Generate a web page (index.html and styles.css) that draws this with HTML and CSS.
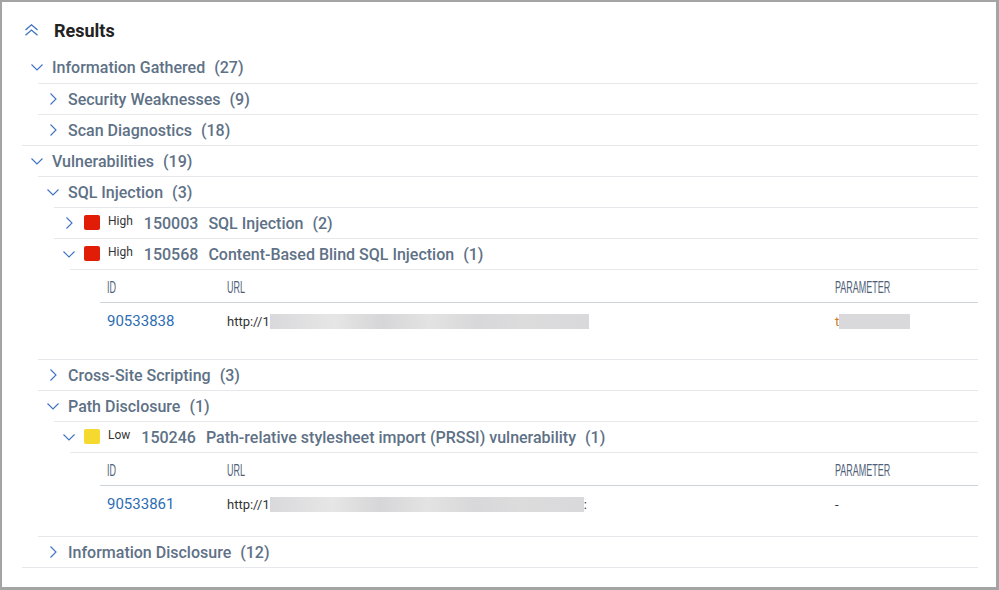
FILE: index.html
```html
<!DOCTYPE html>
<html>
<head>
<meta charset="utf-8">
<link rel="stylesheet" href="styles.css">
</head>
<body>
<div class="page">
  <div class="header">
    <svg class="dbl" width="13" height="12" viewBox="0 0 13 12"><polyline points="0.5,6 6.5,0.8 12.5,6" fill="none" stroke="#3d72c0" stroke-width="1.3"/><polyline points="0.5,11.2 6.5,6 12.5,11.2" fill="none" stroke="#3d72c0" stroke-width="1.3"/></svg>
    <span class="title">Results</span>
  </div>
  <div class="tree">
    <div class="row l1 first"><span class="ic"><svg width="12" height="7" viewBox="0 0 12 7"><polyline points="0.5,0.5 6,6 11.5,0.5" fill="none" stroke="#3d72c0" stroke-width="1.1"/></svg></span><span class="name">Information Gathered</span><span class="cnt">(27)</span></div>
    <div class="row l2"><span class="ic"><svg width="7" height="12" viewBox="0 0 7 12"><polyline points="0.5,0.5 6,6 0.5,11.5" fill="none" stroke="#3d72c0" stroke-width="1.1"/></svg></span><span class="name">Security Weaknesses</span><span class="cnt">(9)</span></div>
    <div class="row l2"><span class="ic"><svg width="7" height="12" viewBox="0 0 7 12"><polyline points="0.5,0.5 6,6 0.5,11.5" fill="none" stroke="#3d72c0" stroke-width="1.1"/></svg></span><span class="name">Scan Diagnostics</span><span class="cnt">(18)</span></div>
    <div class="row l1"><span class="ic"><svg width="12" height="7" viewBox="0 0 12 7"><polyline points="0.5,0.5 6,6 11.5,0.5" fill="none" stroke="#3d72c0" stroke-width="1.1"/></svg></span><span class="name">Vulnerabilities</span><span class="cnt">(19)</span></div>
    <div class="row l2"><span class="ic"><svg width="12" height="7" viewBox="0 0 12 7"><polyline points="0.5,0.5 6,6 11.5,0.5" fill="none" stroke="#3d72c0" stroke-width="1.1"/></svg></span><span class="name">SQL Injection</span><span class="cnt">(3)</span></div>
    <div class="row l3"><span class="ic"><svg width="7" height="12" viewBox="0 0 7 12"><polyline points="0.5,0.5 6,6 0.5,11.5" fill="none" stroke="#3d72c0" stroke-width="1.1"/></svg></span><span class="sev high"></span><span class="lvl">High</span><span class="qid">150003</span><span class="name">SQL Injection</span><span class="cnt">(2)</span></div>
    <div class="row l3"><span class="ic"><svg width="12" height="7" viewBox="0 0 12 7"><polyline points="0.5,0.5 6,6 11.5,0.5" fill="none" stroke="#3d72c0" stroke-width="1.1"/></svg></span><span class="sev high"></span><span class="lvl">High</span><span class="qid">150568</span><span class="name">Content-Based Blind SQL Injection</span><span class="cnt">(1)</span></div>
    <div class="detail tall">
      <div class="tbl">
        <div class="th c1"><span class="hd">ID</span></div>
        <div class="th c2"><span class="hd">URL</span></div>
        <div class="th c3"><span class="hd">PARAMETER</span></div>
        <div class="td c1"><span class="link">90533838</span></div>
        <div class="td c2"><span class="url">http://1</span><span class="redact" style="width:319px"></span></div>
        <div class="td c3"><span class="param">t</span><span class="redact flat" style="width:71px"></span></div>
      </div>
    </div>
    <div class="row l2"><span class="ic"><svg width="7" height="12" viewBox="0 0 7 12"><polyline points="0.5,0.5 6,6 0.5,11.5" fill="none" stroke="#3d72c0" stroke-width="1.1"/></svg></span><span class="name">Cross-Site Scripting</span><span class="cnt">(3)</span></div>
    <div class="row l2"><span class="ic"><svg width="12" height="7" viewBox="0 0 12 7"><polyline points="0.5,0.5 6,6 11.5,0.5" fill="none" stroke="#3d72c0" stroke-width="1.1"/></svg></span><span class="name">Path Disclosure</span><span class="cnt">(1)</span></div>
    <div class="row l3"><span class="ic"><svg width="12" height="7" viewBox="0 0 12 7"><polyline points="0.5,0.5 6,6 11.5,0.5" fill="none" stroke="#3d72c0" stroke-width="1.1"/></svg></span><span class="sev low"></span><span class="lvl">Low</span><span class="qid">150246</span><span class="name">Path-relative stylesheet import (PRSSI) vulnerability</span><span class="cnt">(1)</span></div>
    <div class="detail">
      <div class="tbl">
        <div class="th c1"><span class="hd">ID</span></div>
        <div class="th c2"><span class="hd">URL</span></div>
        <div class="th c3"><span class="hd">PARAMETER</span></div>
        <div class="td c1"><span class="link">90533861</span></div>
        <div class="td c2"><span class="url">http://1</span><span class="redact" style="width:314px"></span><span class="url">:</span></div>
        <div class="td c3"><span class="dash">-</span></div>
      </div>
    </div>
    <div class="row l2"><span class="ic"><svg width="7" height="12" viewBox="0 0 7 12"><polyline points="0.5,0.5 6,6 0.5,11.5" fill="none" stroke="#3d72c0" stroke-width="1.1"/></svg></span><span class="name">Information Disclosure</span><span class="cnt">(12)</span></div>
  </div>
</div>
</body>
</html>
```

FILE: styles.css
```css
* { box-sizing: border-box; }
html, body { margin: 0; padding: 0; background: #fff; }
body { font-family: Roboto, "Liberation Sans", sans-serif; }
.page {
  width: 999px;
  height: 590px;
  border-style: solid;
  border-color: #a4a4a4;
  border-width: 2px 3px 3px 2px;
  padding: 0 18px 0 20px;
  overflow: hidden;
}
.header {
  display: flex;
  align-items: center;
  height: 50px;
  padding: 18px 0 10px 3px;
}
.dbl { display: block; margin-right: 16px; margin-top: -2px; }
.title {
  font-size: 18px;
  line-height: 22px;
  font-weight: 700;
  color: #222;
}
.tree { border-bottom: 1px solid #e6e8eb; }
.row {
  display: flex;
  align-items: center;
  height: 31px;
  border-top: 1px solid #e6e8eb;
  padding-left: 8px;
  font-size: 16px;
  font-weight: 500;
  color: #5e7186;
}
.row.first { border-top: none; height: 31px; }
.l1 { margin-left: 0; }
.l2 { margin-left: 16px; }
.l3 { margin-left: 32px; }
.ic {
  width: 14px;
  height: 14px;
  display: flex;
  align-items: center;
  justify-content: center;
  margin-right: 8px;
}
.ic svg { display: block; }
.name { white-space: nowrap; }
.cnt { margin-left: 9px; }
.sev {
  width: 16px;
  height: 15px;
  border-radius: 2px;
  margin-right: 8px;
  margin-top: -2px;
}
.sev.high { background: #e11d07; }
.sev.low { background: #f6d92e; }
.lvl {
  font-size: 12px;
  font-weight: 400;
  color: #333;
  margin-right: 11px;
  margin-top: -5px;
}
.qid { margin-right: 10px; }
.detail {
  margin-left: 48px;
  border-top: 1px solid #e6e8eb;
  padding: 0 0 14px 30px;
}
.detail.tall { padding-bottom: 20px; }
.tbl {
  display: grid;
  grid-template-columns: 120px 608px 1fr;
}
.th {
  height: 33px;
  padding: 8px 7px 0;
  border-bottom: 1px solid #cdd4dc;
}
.hd {
  display: inline-block;
  font-family: "Liberation Sans", sans-serif;
  font-size: 16.5px;
  line-height: 16px;
  color: #4f6178;
  transform: scaleX(0.545);
  transform-origin: left center;
}
.td {
  height: 36px;
  padding: 0 7px;
  display: flex;
  align-items: center;
}
.link { font-size: 15px; color: #2d6db4; }
.url { font-size: 13px; color: #333; }
.param { font-size: 13px; color: #d07a20; }
.dash { font-size: 13px; color: #333; }
.redact {
  display: inline-block;
  height: 15px;
  background: linear-gradient(90deg, #d9d9dc 0%, #e6e6e6 20%, #d6d6d8 35%, #e3e3e3 50%, #d8d8da 65%, #dcdcdd 80%, #d9d9db 100%);
}
.redact.flat { background: #d9d9db; }
```
